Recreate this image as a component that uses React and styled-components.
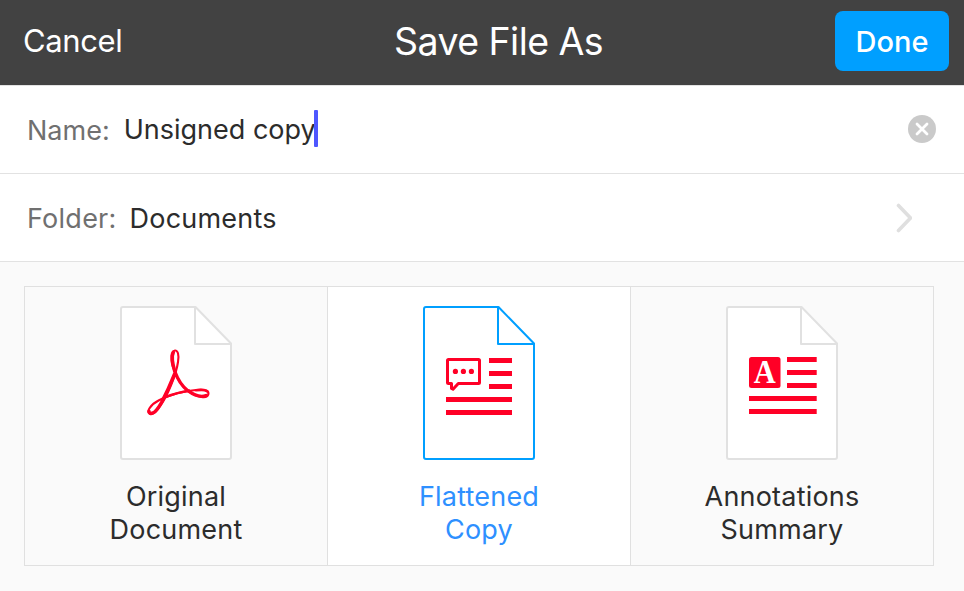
import { createGlobalStyle, styled } from "styled-components";

const RED = "#ff0026";

const OriginalMark = () => (
  <g fill="none" stroke={RED} strokeLinecap="round" strokeLinejoin="round">
    <path
      strokeWidth="2.1"
      d="M54.3 44.7C58 43.5 59.2 49 58 56C56 70 47 90 41 99C37 105.5 33 109.5 29.7 107.8C25.5 105.5 31 98.5 39 94.3C49 89 65 84.5 78 83.7C86 83.2 89.3 85 88.3 88.5C87 93 78 91.6 68 85C58 77.5 54.5 66 52.5 60C50.5 53 51 45.5 54.3 44.7Z"
    />
    <path
      strokeWidth="3.4"
      d="M54.6 65C52.2 56 51.9 49 53.4 46.4M55 66C58 74 62 80 67.5 84.5M55 67C51 77 46 88 41.5 96.5C38 102.5 34.5 107 31.8 107.3C30 107.6 29 106.8 29 105.3M68 84.7C75 90 82 91 86 89.6"
    />
    <path strokeWidth="2.5" d="M44.5 91.3C52 88.5 61 85.8 69 84.7M76 84.3C82 83.5 86 84 87.5 85.5" />
  </g>
);

const FlattenedMark = () => (
  <g fill={RED}>
    <path
      fill="none"
      stroke={RED}
      strokeWidth="3"
      strokeLinejoin="round"
      d="M25.5 53.5H55.5a1 1 0 0 1 1 1V76.5a1 1 0 0 1-1 1H35.3L30 83.2L28.5 82.5V77.5H25.5a1 1 0 0 1-1-1V54.5a1 1 0 0 1 1-1Z"
    />
    <circle cx="32.4" cy="65.4" r="2.6" />
    <circle cx="40.4" cy="65.4" r="2.6" />
    <circle cx="48.4" cy="65.4" r="2.6" />
    <path d="M66 52h23v5H66zM66 65h23v5H66zM66 78h23v5H66zM23 91h66v5H23zM23 104h66v5H23z" />
  </g>
);

const SummaryMark = () => (
  <g fill={RED}>
    <rect x="23" y="51" width="31.5" height="31" rx="2.5" />
    <path d="M61 51h29.7v5H61zM61 64h29.7v5H61zM61 77h29.7v5H61zM23 90h67.7v5H23zM23 103h67.7v5H23z" />
    <text
      x="38.7"
      y="77.3"
      fill="#fff"
      fontFamily="'Liberation Serif', serif"
      fontSize="34"
      fontWeight="700"
      textAnchor="middle"
      textLength="22"
      lengthAdjust="spacingAndGlyphs"
    >
      A
    </text>
  </g>
);

const options = [
  { lines: ["Original", "Document"], Mark: OriginalMark },
  { lines: ["Flattened", "Copy"], Mark: FlattenedMark, selected: true },
  { lines: ["Annotations", "Summary"], Mark: SummaryMark },
];

// eslint-disable-next-line react/prop-types
const PageIcon = ({ selected, children }) => (
  <Page viewBox="0 0 112 154" $selected={selected}>
    <path d="M3 1H75.5L111 37.5V151a2 2 0 0 1-2 2H3a2 2 0 0 1-2-2V3a2 2 0 0 1 2-2ZM111 38H75V1" />
    {children}
  </Page>
);

const App = () => {
  return (
    <Screen>
      <GlobalStyle />
      <Header>
        <CancelButton>Cancel</CancelButton>
        <Title>Save File As</Title>
        <DoneButton>Done</DoneButton>
      </Header>
      <Field $first>
        <Label>Name:</Label>
        <NameValue>Unsigned copy</NameValue>
        <Caret />
        <ClearIcon viewBox="0 0 28 28">
          <circle cx="14" cy="14" r="14" fill="#cacaca" />
          <path d="M9 9l10 10M19 9L9 19" stroke="#fff" strokeWidth="2.8" strokeLinecap="round" />
        </ClearIcon>
      </Field>
      <Field>
        <Label $spacing="0.25px">Folder:</Label>
        <FolderValue>Documents</FolderValue>
        <Chevron viewBox="0 0 16 30">
          <path d="M2.5 2.5L14.5 15L2.5 27.5" />
        </Chevron>
      </Field>
      <Panel>
        <Options>
          {options.map(({ lines, Mark, selected }) => (
            <Option key={lines[0]} $selected={selected}>
              <PageIcon selected={selected}>
                <Mark />
              </PageIcon>
              <Caption $selected={selected}>
                {lines.map((line) => (
                  <span key={line}>{line}</span>
                ))}
              </Caption>
            </Option>
          ))}
        </Options>
      </Panel>
    </Screen>
  );
};

export default App;

const GlobalStyle = createGlobalStyle`
  body {
    margin: 0;
    background: #fafafa;
  }
  * {
    box-sizing: border-box;
  }
`;

const Screen = styled.div`
  display: flex;
  flex-direction: column;
  width: 964px;
  height: 591px;
  overflow: hidden;
  background: #fafafa;
  color: #2c2c2c;
  font-family: Inter, "Liberation Sans", sans-serif;
`;

const Header = styled.header`
  display: grid;
  grid-template-columns: 1fr auto 1fr;
  height: 85px;
  padding: 0 15px 0 23px;
  background: #424242;
  color: #fff;
`;

const HeaderButton = styled.button`
  border: 0;
  padding: 0;
  background: none;
  color: inherit;
  font-family: inherit;
`;

const CancelButton = styled(HeaderButton)`
  justify-self: start;
  height: 80px;
  font-size: 31px;
  letter-spacing: -0.4px;
`;

const Title = styled.h1`
  margin: 0 0 0 25px;
  font-size: 37.5px;
  font-weight: 400;
  line-height: 84px;
  letter-spacing: -0.55px;
`;

const DoneButton = styled(HeaderButton)`
  justify-self: end;
  width: 114px;
  height: 60px;
  margin-top: 11px;
  border-radius: 8px;
  background: #009fff;
  font-size: 29px;
  font-weight: 500;
`;

const Field = styled.div`
  display: flex;
  align-items: center;
  height: ${({ $first }) => ($first ? "89px" : "88px")};
  padding: 0 28px 0 27px;
  border-top: ${({ $first }) => ($first ? "1px solid #e2e2e2" : "0")};
  border-bottom: 1px solid #e2e2e2;
  background: #fff;
  font-size: 27px;
  line-height: 36px;
`;

const Label = styled.span`
  padding-top: 2px;
  color: #707070;
  letter-spacing: ${({ $spacing }) => $spacing || "0"};
`;

const NameValue = styled.span`
  margin-left: 14px;
`;

const FolderValue = styled.span`
  margin-left: 13px;
  padding-top: 2px;
  letter-spacing: 0.2px;
`;

const Caret = styled.span`
  width: 4px;
  height: 37px;
  margin: 0 0 2px -2px;
  border-radius: 1px;
  background: #4e57ff;
`;

const ClearIcon = styled.svg`
  width: 28px;
  height: 28px;
  margin: 0 0 2px auto;
`;

const Chevron = styled.svg`
  width: 16px;
  height: 30px;
  margin: 1px 24px 0 auto;
  fill: none;
  stroke: #dfdfdf;
  stroke-width: 3.6;
  stroke-linecap: round;
  stroke-linejoin: round;
`;

const Panel = styled.main`
  padding: 24px 30px 25px 24px;
`;

const Options = styled.div`
  display: grid;
  grid-template-columns: repeat(3, 303px);
  width: 910px;
  height: 280px;
  border: 1px solid #e0e0e0;
  border-left: 0;
`;

const Option = styled.div`
  display: flex;
  flex-direction: column;
  align-items: center;
  padding-top: 19px;
  border-left: 1px solid #e0e0e0;
  background: ${({ $selected }) => ($selected ? "#fff" : "#fafafa")};
`;

const Page = styled.svg`
  width: 112px;
  height: 154px;

  > path {
    fill: #fff;
    stroke: ${({ $selected }) => ($selected ? "#009fff" : "#e1e1e1")};
    stroke-width: 2;
    stroke-linejoin: round;
  }
`;

const Caption = styled.p`
  display: flex;
  flex-direction: column;
  align-items: center;
  margin: 20px 0 0;
  color: ${({ $selected }) => ($selected ? "#2e90ff" : "inherit")};
  font-size: 27px;
  line-height: 33px;
  letter-spacing: 0.2px;
`;
